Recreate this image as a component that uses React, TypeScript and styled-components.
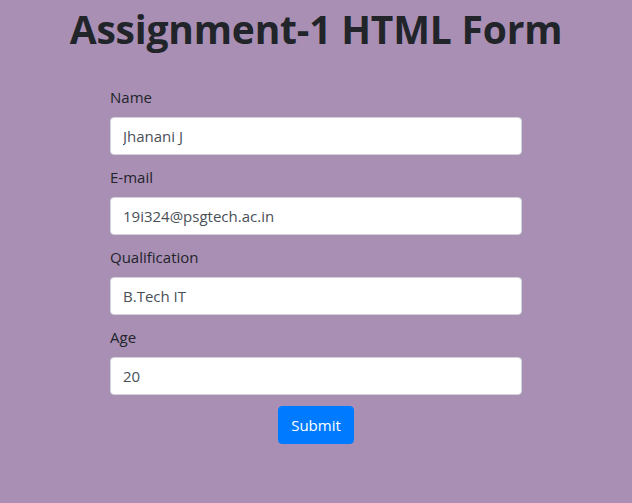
import styled, { createGlobalStyle } from 'styled-components';

const GlobalStyle = createGlobalStyle`
  * { box-sizing: border-box; }
  body {
    margin: 0;
    background: #aa8fb5;
    font-family: "Open Sans", "Noto Sans", sans-serif;
    font-size: 16px;
    line-height: 1.5;
    color: #212529;
  }
`;

const Page = styled.div`
  display: flex;
  flex-direction: column;
  align-items: center;
  padding-top: 6px;
`;

const Title = styled.h1`
  margin: 0 0 33px;
  font-size: 39px;
  font-weight: 700;
  line-height: 46px;
  letter-spacing: -0.2px;
`;

const Form = styled.form`
  width: 412px;
  display: flex;
  flex-direction: column;
`;

const Group = styled.div`
  margin-bottom: 10px;
`;

const Label = styled.label`
  display: block;
  margin-bottom: 8px;
  font-size: 15px;
  line-height: 24px;
`;

const Input = styled.input`
  display: block;
  width: 100%;
  height: 38px;
  padding: 6px 12px;
  font-family: inherit;
  font-size: 15px;
  color: #495057;
  background: #fff;
  border: 1px solid #ced4da;
  border-radius: 4px;
  outline: none;
`;

const Submit = styled.button`
  align-self: center;
  margin-top: 1px;
  height: 38px;
  padding: 6px 12px;
  font-family: inherit;
  font-size: 15px;
  color: #fff;
  background: #007bff;
  border: 1px solid #007bff;
  border-radius: 4px;
`;

const fields = [
  { label: 'Name', value: 'Jhanani J' },
  { label: 'E-mail', value: '19i324@psgtech.ac.in' },
  { label: 'Qualification', value: 'B.Tech IT' },
  { label: 'Age', value: '20' },
];

export default function App() {
  return (
    <>
      <GlobalStyle />
      <Page>
        <Title>Assignment-1 HTML Form</Title>
        <Form onSubmit={(e) => e.preventDefault()}>
          {fields.map((f) => (
            <Group key={f.label}>
              <Label>{f.label}</Label>
              <Input defaultValue={f.value} />
            </Group>
          ))}
          <Submit type="submit">Submit</Submit>
        </Form>
      </Page>
    </>
  );
}
